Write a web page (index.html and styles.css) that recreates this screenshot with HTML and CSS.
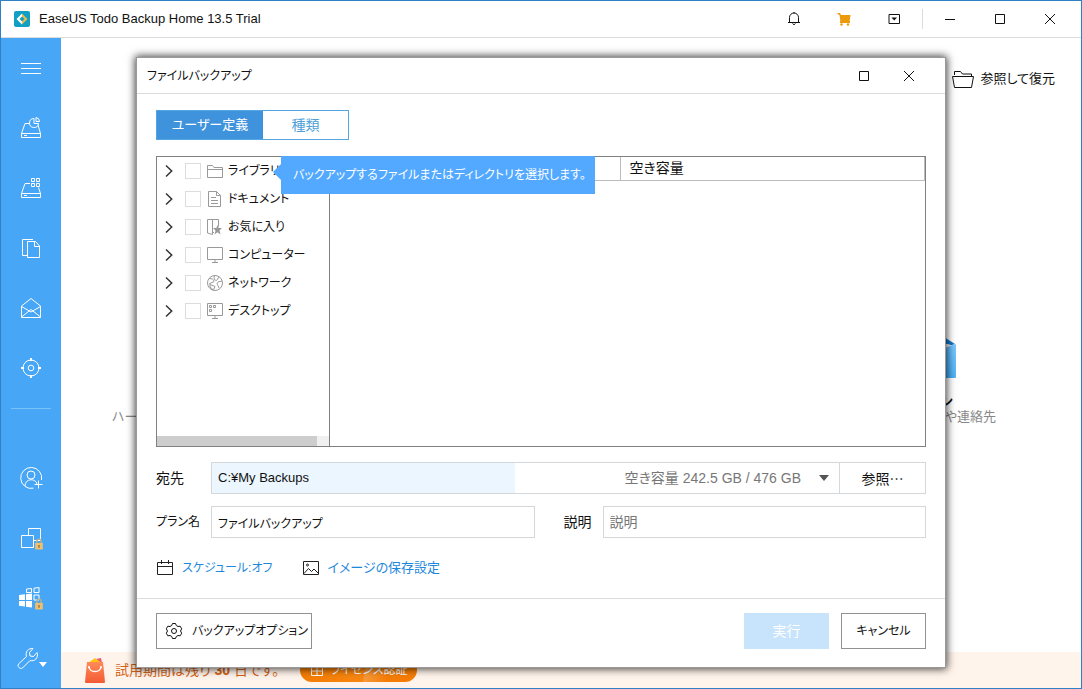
FILE: index.html
```
<!DOCTYPE html>
<html lang="ja">
<head>
<meta charset="utf-8">
<title>EaseUS Todo Backup Home 13.5 Trial</title>
<link rel="stylesheet" href="styles.css">
</head>
<body>
<svg class="defs" aria-hidden="true">
  <symbol id="chevron" viewBox="0 0 8 14"><path d="M1 1.500 6.700 7 1 12.500"/></symbol>
  <symbol id="lock" viewBox="0 0 9 11"><path d="M2.500 4.500V3a2 2 0 0 1 4 0v1.500" fill="none" stroke="#b9b08a" stroke-width="1.300"/><path d="M1 4.500h7v6H1z" fill="#eebf6d"/><path d="M4 6.500h1v2.500H4z" fill="#75613c"/></symbol>
</svg>
<div class="window">
  <header class="titlebar">
    <svg class="logo" viewBox="0 0 16 16"><rect width="16" height="16" rx="2" fill="#129fc5"/><path d="M8 2.500 2.500 8 8 13.500V10.500L5.500 8 8 5.500z" fill="#fff"/><path d="M8 2.500 13.500 8 8 13.500V10.500L10.500 8 8 5.500z" fill="#e8bd48"/></svg>
    <h1 class="app-title">EaseUS Todo Backup Home 13.5 Trial</h1>
    <div class="tools">
      <button class="tool" aria-label="通知"><svg viewBox="0 0 16 16"><path d="M2 11.500h12M3.500 11V6.500a4.500 4.500 0 0 1 9 0V11M6.500 12.500q1.500 2.500 3 0M8 1v1.500"/></svg></button>
      <button class="tool cart" aria-label="購入"><svg viewBox="0 0 16 16"><path d="M1.500 2h2.500l1 2h9.500l-1 7H4.500L3.500 4 1.500 3z"/><path d="M4 10h10v2H4z"/><circle cx="5.500" cy="13.500" r="1.200"/><circle cx="12" cy="13.500" r="1.200"/></svg></button>
      <button class="tool" aria-label="メニュー"><svg viewBox="0 0 16 16"><path d="M3 3.500h10.500v9H3z"/><path d="M5.500 6.500h5.500L8.200 9.500z" fill="#111" stroke="none"/></svg></button>
    </div>
    <div class="tools window-tools">
      <button class="tool" aria-label="最小化"><svg viewBox="0 0 16 16"><path d="M3 8.500h10"/></svg></button>
      <button class="tool" aria-label="最大化"><svg viewBox="0 0 16 16"><path d="M3.500 3.500h9v9h-9z"/></svg></button>
      <button class="tool" aria-label="閉じる"><svg viewBox="0 0 16 16"><path d="m3 3 10 10M13 3 3 13"/></svg></button>
    </div>
  </header>
  <div class="workspace">
    <nav class="sidebar" aria-label="メイン">
      <button class="nav-item" aria-label="メニューを開く"><svg viewBox="0 0 24 24"><path d="M2 7.500h20M2 12.500h20M2 17.500h20"/></svg></button>
      <button class="nav-item" aria-label="ディスク"><svg viewBox="0 0 24 24"><path d="M11 7.500H6L2.500 17.500v4h19v-4L19 9M2.500 17.500h19M5 19.500h3"/><path d="M15 2.500a4.500 4.500 0 1 0 4.500 5H15zM17 1.500v4h3.500a4 4 0 0 0-3.500-4z"/></svg></button>
      <button class="nav-item" aria-label="システム"><svg viewBox="0 0 24 24"><path d="M11 7.500H6L2.500 17.500v4h19v-4L19.500 11.500M2.500 17.500h19M5 19.500h3"/><path d="M12.500 2.500h3v3h-3zM17.500 2.500h3v3h-3zM12.500 7.500h3v3h-3zM17.500 7.500h3v3h-3z"/></svg></button>
      <button class="nav-item" aria-label="ファイル"><svg viewBox="0 0 24 24"><path d="M8 19.500H3.500v-16H14M8.500 5.500h8l4 4.500v11.500h-12zM15.500 5.500v5h5"/></svg></button>
      <button class="nav-item" aria-label="メール"><svg viewBox="0 0 24 24"><path d="M2.500 10 12 2.500 21.500 10v11.500h-19zM2.500 10.500 12 16l9.500-5.500M2.500 21 12 13.500l9.500 7.500"/></svg></button>
      <button class="nav-item" aria-label="スマート"><svg viewBox="0 0 24 24"><circle cx="12" cy="12" r="8"/><circle cx="12" cy="12" r="2.800"/><path stroke-width="2" d="M12 2v3M12 19v3M2 12h3M19 12h3"/></svg></button>
      <hr class="nav-rule">
      <button class="nav-item" aria-label="アカウント"><svg viewBox="0 0 24 24"><path d="M22.500 14a10.500 10.500 0 1 0-8 8.200M6 20c0-8 11-8 12-2M19.500 14.500v8M15.500 18.500h8"/><circle cx="12" cy="9" r="4"/></svg></button>
      <button class="nav-item" aria-label="クローン"><svg viewBox="0 0 24 24"><path d="M2.500 9.500h12v12h-12zM9.500 9V2.500h12v12H15"/></svg><svg class="badge"><use href="#lock"/></svg></button>
      <button class="nav-item" aria-label="システムクローン"><svg viewBox="0 0 24 24"><path d="M7.500 3l5-.500v4h-5zM15 2.200l5-.700v5h-5zM15 9h5v5h-5z"/><path fill="#fff" stroke="none" d="m0 9 6-.700V14H0zM7 8.200l6-.700V14H7zM0 15h6v5.500l-6-.700zM7 15h6v6.500l-6-.800z"/></svg><svg class="badge"><use href="#lock"/></svg></button>
      <button class="nav-item wrench" aria-label="ツール"><svg viewBox="0 0 24 24"><path d="m2.500 18 8-7.500C9 6 12 2 17 2.500l-3.500 4 .5 3.500 3.500.5 3.500-4c2 5-2.500 9.500-7 8l-7.500 7.500c-2.500 1.500-5.500-1.500-4-4z"/></svg><svg class="drop" viewBox="0 0 8 5"><path d="M0 0h8L4 5z"/></svg></button>
    </nav>
    <main class="main">
      <div class="toolbar"><button class="restore"><svg viewBox="0 0 24 20"><path d="M3.500 6V2.500h6l2 2.500h9v2M1.500 7.500h21l-2 11h-17z"/></svg>参照して復元</button></div>
      <div class="tiles">
        <section class="tile"><p class="tile-text">ハー</p></section>
        <section class="tile mail-tile">
          <svg class="mail-art" viewBox="0 0 16 42"><defs><linearGradient id="sky" x1="1" y1="0" x2="0" y2="1"><stop offset="0" stop-color="#7ccaff"/><stop offset="1" stop-color="#2e9bec"/></linearGradient></defs><path d="M0 0h4l11 7-9 3H0z" fill="#1578c8"/><path d="M0 7h8l5 2-9 5H0z" fill="#f2f2f2"/><path d="M0 13 15 7q1 0 1 1v32q0 1-1 1H0z" fill="url(#sky)"/></svg>
          <h2 class="tile-title">ン</h2>
          <p class="tile-text">や連絡先</p>
        </section>
      </div>
      <footer class="trial">
        <svg class="bag" viewBox="0 0 22 28"><defs><linearGradient id="bagfill" x1="0" y1="0" x2="0" y2="1"><stop offset="0" stop-color="#ff8b58"/><stop offset="1" stop-color="#f45a35"/></linearGradient></defs><path d="M4 7 11 2l2 2 4-1 1 5z" fill="#ffc40c"/><path d="m12 3 5-1 1 5z" fill="#ec5a78"/><path d="M3 6h16l2 20q0 1-1 1H2q-1 0-1-1z" fill="url(#bagfill)"/><path d="M5 11c1 6 11 6 12 0" fill="none" stroke="#fff" stroke-width="1.500"/><circle cx="5" cy="11" r="1" fill="#fff"/><circle cx="17" cy="11" r="1" fill="#fff"/></svg>
        <p class="trial-text">試用期間は残り <b>30</b> 日です。</p>
        <button class="license"><svg viewBox="0 0 14 14"><path d="M1.500 4.500h11v8h-11zM7 4.500v8M1.500 8h11M3.500 1.500 7 4l3.500-2.500"/></svg>ライセンス認証</button>
      </footer>
    </main>
  </div>

  <div class="dialog" role="dialog" aria-labelledby="dialog-title">
    <header class="dialog-head">
      <h2 class="dialog-title" id="dialog-title">ファイルバックアップ</h2>
      <div class="dialog-tools">
        <button class="tool" aria-label="最大化"><svg viewBox="0 0 16 16"><path d="M3.500 3.500h9v9h-9z"/></svg></button>
        <button class="tool" aria-label="閉じる"><svg viewBox="0 0 16 16"><path d="m3 3 10 10M13 3 3 13"/></svg></button>
      </div>
    </header>
    <div class="dialog-body">
      <div class="tabs" role="tablist">
        <button class="tab active" role="tab" aria-selected="true">ユーザー定義</button>
        <button class="tab kanji" role="tab" aria-selected="false">種類</button>
      </div>
      <div class="browser">
        <div class="tree-pane">
          <ul class="tree">
            <li class="node"><button class="expand" aria-label="展開"><svg><use href="#chevron"/></svg></button><input class="check" type="checkbox" id="n1"><label class="node-label" for="n1"><svg viewBox="0 0 18 18"><path d="M1.500 15.500v-12h5l1.500 2h8.500v10zM1.500 7.500h15"/></svg>ライブラリ</label></li>
            <li class="node"><button class="expand" aria-label="展開"><svg><use href="#chevron"/></svg></button><input class="check" type="checkbox" id="n2"><label class="node-label" for="n2"><svg viewBox="0 0 18 18"><path d="M2.500 1.500h8l4 4v11h-12zM10.500 1.500v4h4M5 7.500h5M5 10.500h7M5 13.500h7"/></svg>ドキュメント</label></li>
            <li class="node"><button class="expand" aria-label="展開"><svg><use href="#chevron"/></svg></button><input class="check" type="checkbox" id="n3"><label class="node-label" for="n3"><svg viewBox="0 0 18 18"><path d="M1.500 1.500h5v15l-5-1.500zM6.500 1.500h6v7M6.500 14.500H8"/><path d="m11.500 7 1.200 3h3.300l-2.500 2.500 1 4-3-2.200-3 2.200 1-4L7 10h3.300z" fill="#999" stroke="none"/></svg>お気に入り</label></li>
            <li class="node"><button class="expand" aria-label="展開"><svg><use href="#chevron"/></svg></button><input class="check" type="checkbox" id="n4"><label class="node-label" for="n4"><svg viewBox="0 0 18 18"><path d="M1.500 1.500h15v12h-15zM9 13.500v3M6 16.500h6"/></svg>コンピューター</label></li>
            <li class="node"><button class="expand" aria-label="展開"><svg><use href="#chevron"/></svg></button><input class="check" type="checkbox" id="n5"><label class="node-label" for="n5"><svg viewBox="0 0 18 18"><circle cx="9" cy="9" r="7.500"/><path d="M3 4.500c3 0 5 1 5 3L3 10M8.500 1.500c-1 3 0 5 2 5l2.500-3.500M16 7l-4 1c-2 2 0 3 1 6M4 10.500l5 2-1.500 3.500L4 13z"/></svg>ネットワーク</label></li>
            <li class="node"><button class="expand" aria-label="展開"><svg><use href="#chevron"/></svg></button><input class="check" type="checkbox" id="n6"><label class="node-label" for="n6"><svg viewBox="0 0 18 18"><path d="M1.500 1.500h15v12h-15zM9 13.500v3M6 16.500h6M3.500 3.500h2v2h-2zM7.500 3.500h2v2h-2zM3.500 7.500h2v2h-2z"/></svg>デスクトップ</label></li>
          </ul>
          <div class="scroll"><div class="thumb"></div></div>
          <div class="tip" role="tooltip">バックアップするファイルまたはディレクトリを選択します。</div>
        </div>
        <div class="list-pane">
          <table class="files"><thead><tr><th class="name-col"></th><th>空き容量</th></tr></thead></table>
        </div>
      </div>
      <div class="form-row">
        <label class="form-label kanji" for="dest">宛先</label>
        <div class="dest">
          <div class="dest-field">
            <select class="dest-select" id="dest"><option>C:¥My Backups</option></select>
            <span class="free">空き容量 242.5 GB / 476 GB</span>
            <svg class="arrow" viewBox="0 0 10 6"><path d="M0 0h10L5 6z"/></svg>
          </div>
          <button class="browse">参照…</button>
        </div>
      </div>
      <div class="form-row">
        <label class="form-label kana" for="plan">プラン名</label>
        <input class="field kana" id="plan" type="text" value="ファイルバックアップ">
        <label class="desc-label kanji" for="desc">説明</label>
        <input class="field kanji" id="desc" type="text" placeholder="説明">
      </div>
      <div class="options">
        <a class="option kana" href="#"><svg viewBox="0 0 18 18"><path d="M1.500 3.500h15v12h-15zM1.500 7.500h15M5.500 1v4M12.500 1v4"/></svg>スケジュール:オフ</a>
        <a class="option" href="#"><svg viewBox="0 0 18 18"><path d="M1.500 2.500h15v13h-15zM2 14.500l4.500-5 3 3 2.500-2.500 4 4"/><circle cx="5.500" cy="6" r="1"/></svg>イメージの保存設定</a>
      </div>
    </div>
    <footer class="dialog-foot">
      <button class="button settings"><svg viewBox="0 0 18 18"><path d="M7.500 1.500h3l.8 2 1.700 1 2.200-.3 1.500 2.600L15.500 9l1.200 2.200-1.500 2.600-2.200-.3-1.700 1-.8 2h-3l-.8-2-1.700-1-2.200.3-1.500-2.600L2.500 9 1.300 6.800l1.500-2.600 2.200.3 1.700-1z"/><circle cx="9" cy="9" r="2.500"/></svg>バックアップオプション</button>
      <button class="button run" disabled>実行</button>
      <button class="button">キャンセル</button>
    </footer>
  </div>
</div>
</body>
</html>
```
FILE: styles.css
```
* { box-sizing: border-box; }
html, body { height: 100%; }
body {
  margin: 0;
  font-family: "Liberation Sans", "Noto Sans CJK JP", sans-serif;
  font-size: 13px;
  line-height: 20px;
  font-feature-settings: "palt";
  color: #111;
  background: #fff;
}
h1, h2, p, ul { margin: 0; padding: 0; font-size: 13px; font-weight: 400; }
ul { list-style: none; }
button, input, select { font: inherit; font-feature-settings: inherit; color: inherit; margin: 0; }
button { padding: 0; border: 0; background: none; white-space: nowrap; }
svg { display: block; flex: none; fill: none; stroke: currentColor; }
.defs { position: absolute; width: 0; height: 0; }

.window {
  position: relative;
  display: flex;
  flex-direction: column;
  min-height: 100%;
  border: 1px solid #2f80c4;
}
.titlebar {
  display: flex;
  align-items: center;
  height: 37px;
  padding: 0 15px 0 13px;
  border-bottom: 1px solid #dcdcdc;
}
.logo { width: 16px; height: 16px; stroke: none; }
.app-title { flex: 1; padding-left: 9px; white-space: nowrap; }
.tools { display: flex; gap: 18px; }
.tool { display: grid; place-items: center; width: 32px; height: 20px; color: #111; }
.tool svg { width: 16px; height: 16px; }
.cart svg { fill: #eb9a0b; stroke: none; }
.window-tools { margin-left: 12px; padding-left: 11px; border-left: 1px solid #dcdcdc; }

.workspace { flex: 1; display: flex; }
.sidebar {
  display: flex;
  flex-direction: column;
  align-items: center;
  width: 60px;
  background: #48a6f6;
  color: #fff;
}
.nav-item { position: relative; display: grid; place-items: center; width: 60px; height: 60px; }
.nav-item svg { width: 24px; height: 24px; }
.nav-item .badge { position: absolute; left: 33px; top: 30px; width: 10px; height: 12px; stroke: none; }
.nav-item .drop { position: absolute; left: 38px; top: 34px; width: 8px; height: 5px; fill: #fff; stroke: none; }
.wrench { place-items: center start; padding-left: 15px; }
.nav-rule { width: 40px; margin: 10px 0 39px; border: 0; border-top: 1px solid #7cc0f9; }

.main { flex: 1; display: flex; flex-direction: column; }
.toolbar { display: flex; justify-content: flex-end; padding: 29px 26px 0 0; }
.restore { display: flex; align-items: center; gap: 5px; height: 24px; }
.restore svg { width: 24px; height: 20px; }
.tiles { flex: 1; display: flex; justify-content: space-between; align-items: flex-end; padding: 0 85px 223px 51px; }
.tile-text { color: #888; line-height: 24px; }
.mail-art { width: 16px; height: 42px; stroke: none; }
.mail-tile { width: 56px; padding: 0; }
.mail-tile .tile-text { text-align: right; }
.tile-title { padding-top: 18px; font-size: 14px; font-weight: 700; line-height: 8px; }
.trial { display: flex; align-items: center; height: 36px; padding-left: 23px; background: #fff4eb; }
.bag { width: 22px; height: 28px; stroke: none; }
.trial-text { padding-left: 9px; color: #d36418; font-size: 14px; }
.license {
  display: flex;
  align-items: center;
  justify-content: center;
  gap: 6px;
  width: 117px;
  height: 24px;
  margin-left: 21px;
  border-radius: 12px;
  background: linear-gradient(100deg, #f57c00, #f88712 55%, #f79a3c 56%, #f67d05 75%);
  color: #fff;
  font-size: 12px;
}
.license svg { width: 14px; height: 14px; }

.dialog {
  position: absolute;
  inset: 56px 135px 20px;
  display: flex;
  flex-direction: column;
  border: 1px solid #999;
  background: #fff;
  box-shadow: 0 0 8px 1px rgba(0, 0, 0, .75);
}
.dialog-head {
  display: flex;
  align-items: center;
  justify-content: space-between;
  height: 36px;
  padding: 0 20px 0 10px;
  border-bottom: 1px solid #d9dcdf;
}
.dialog-title, .kana { font-size: 12px; }
.kanji { font-size: 14px; }
.dialog-tools { display: flex; gap: 13px; }
.dialog-body { flex: 1; display: flex; flex-direction: column; padding: 16px 19px 0; }
.tabs { display: flex; width: 193px; height: 30px; border: 1px solid #55a5e2; }
.tab { flex: 1; color: #4e9fda; }
.tab.active { flex: 0 0 106px; background: #3f93dc; color: #fff; }
.browser { flex: 1; display: flex; margin-top: 16px; border: 1px solid #808080; }
.tree-pane { position: relative; display: flex; flex-direction: column; width: 173px; border-right: 1px solid #808080; }
.tree { flex: 1; }
.node { display: flex; align-items: center; height: 28px; padding-left: 8px; }
.expand { width: 8px; height: 14px; margin-right: 12px; }
.expand svg { width: 8px; height: 14px; color: #333; stroke-width: 1.500; }
.check { appearance: none; width: 16px; height: 16px; border: 1px solid #dcdcdc; background: #fff; }
.node-label { display: flex; align-items: center; gap: 4px; padding-left: 5px; white-space: nowrap; font-size: 12px; }
.node-label svg { width: 18px; height: 18px; color: #999; }
.scroll { height: 10px; background: #f0f0f0; }
.thumb { width: 160px; height: 10px; background: #cdcdcd; }
.tip {
  position: absolute;
  left: 124px;
  top: -1px;
  z-index: 1;
  width: 314px;
  padding: 9px 0 9px 12px;
  background: #53a9ff;
  color: #fff;
  font-size: 12px;
  white-space: nowrap;
}
.tip::before {
  content: "";
  position: absolute;
  left: -8px;
  top: 8px;
  border: 8px solid transparent;
  border-left: 0;
  border-right-color: #53a9ff;
}
.list-pane { flex: 1; }
.files { width: 100%; border-collapse: collapse; table-layout: fixed; }
.files th { height: 23px; padding: 0 9px; border-bottom: 1px solid #bcbcbc; border-right: 1px solid #bcbcbc; font-size: 14px; font-weight: 400; text-align: left; }
.files .name-col { width: 290px; }

.form-row { display: flex; align-items: center; height: 32px; margin-top: 15px; }
.form-row + .form-row { margin-top: 12px; }
.form-label { flex: none; width: 55px; white-space: nowrap; }
.dest { flex: 1; display: flex; height: 32px; border: 1px solid #d4d8db; }
.dest-field { flex: 1; display: grid; grid-template-columns: 1fr auto 14px; align-items: center; column-gap: 18px; padding-right: 6px; background: linear-gradient(#ebf6fe, #ebf6fe) no-repeat 0 0 / 48.400% 100%; }
.dest-select { grid-area: 1 / 1 / 2 / 4; width: 100%; height: 30px; padding: 0 6px; border: 0; appearance: none; background: none; }
.free { grid-area: 1 / 2; color: #777; font-size: 14px; pointer-events: none; }
.arrow { grid-area: 1 / 3; width: 10px; height: 6px; fill: #555; stroke: none; pointer-events: none; }
.browse { width: 86px; border-left: 1px solid #d4d8db; font-family: "Noto Sans CJK JP", sans-serif; font-size: 14px; }
.field { flex: 1; min-width: 0; height: 32px; padding: 0 6px; border: 1px solid #d4d8db; background: #fff; }
.field::placeholder { color: #777; opacity: 1; }
.desc-label { flex: none; width: 68px; padding-left: 29px; }
.options { display: flex; gap: 29px; padding: 20px 0; }
.option { display: flex; align-items: center; gap: 8px; color: #1e88dc; text-decoration: none; }
.option svg { width: 18px; height: 18px; color: #222; }
.dialog-foot { display: flex; gap: 12px; padding: 14px 19px 18px; border-top: 1px solid #d9dcdf; }
.button { width: 85px; height: 36px; border: 1px solid #929292; background: #fff; font-size: 12px; }
.settings { display: flex; align-items: center; gap: 9px; width: 156px; margin-right: auto; padding-left: 8px; }
.settings svg { width: 18px; height: 18px; }
.run { border: 0; background: #c8e4fc; color: #fff; font-size: 14px; }
```
